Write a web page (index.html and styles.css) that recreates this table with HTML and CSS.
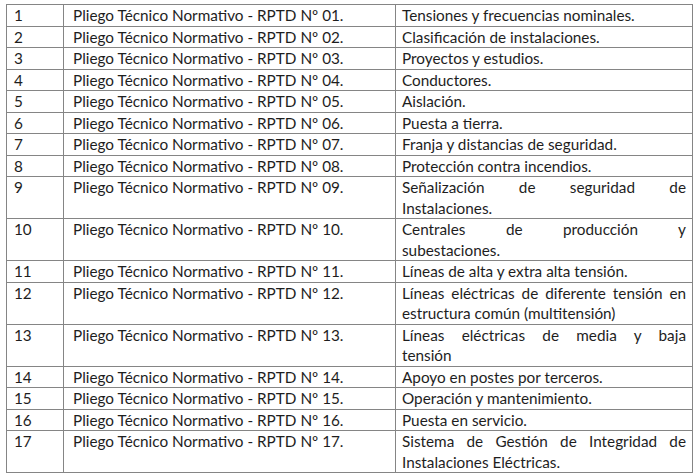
FILE: index.html
```html
<!DOCTYPE html>
<html lang="es">
<head>
<meta charset="utf-8">
<title>Pliegos Técnicos Normativos RPTD</title>
<link rel="stylesheet" href="styles.css">
</head>
<body>
<table class="rptd">
  <colgroup>
    <col class="c-num">
    <col class="c-doc">
    <col class="c-desc">
  </colgroup>
  <tbody>
    <tr><td>1</td><td>Pliego Técnico Normativo - RPTD Nº 01.</td><td>Tensiones y frecuencias nominales.</td></tr>
    <tr><td>2</td><td>Pliego Técnico Normativo - RPTD Nº 02.</td><td>Clasificación de instalaciones.</td></tr>
    <tr><td>3</td><td>Pliego Técnico Normativo - RPTD Nº 03.</td><td>Proyectos y estudios.</td></tr>
    <tr><td>4</td><td>Pliego Técnico Normativo - RPTD Nº 04.</td><td>Conductores.</td></tr>
    <tr><td>5</td><td>Pliego Técnico Normativo - RPTD Nº 05.</td><td>Aislación.</td></tr>
    <tr><td>6</td><td>Pliego Técnico Normativo - RPTD Nº 06.</td><td>Puesta a tierra.</td></tr>
    <tr><td>7</td><td>Pliego Técnico Normativo - RPTD Nº 07.</td><td>Franja y distancias de seguridad.</td></tr>
    <tr><td>8</td><td>Pliego Técnico Normativo - RPTD Nº 08.</td><td>Protección contra incendios.</td></tr>
    <tr><td>9</td><td>Pliego Técnico Normativo - RPTD Nº 09.</td><td><span class="jl">Señalización de seguridad de</span><span class="ln">Instalaciones.</span></td></tr>
    <tr><td>10</td><td>Pliego Técnico Normativo - RPTD Nº 10.</td><td><span class="jl">Centrales de producción y</span><span class="ln">subestaciones.</span></td></tr>
    <tr><td>11</td><td>Pliego Técnico Normativo - RPTD Nº 11.</td><td>Líneas de alta y extra alta tensión.</td></tr>
    <tr><td>12</td><td>Pliego Técnico Normativo - RPTD Nº 12.</td><td><span class="jl">Líneas eléctricas de diferente tensión en</span><span class="ln">estructura común (multitensión)</span></td></tr>
    <tr><td>13</td><td>Pliego Técnico Normativo - RPTD Nº 13.</td><td><span class="jl">Líneas eléctricas de media y baja</span><span class="ln">tensión</span></td></tr>
    <tr><td>14</td><td>Pliego Técnico Normativo - RPTD Nº 14.</td><td>Apoyo en postes por terceros.</td></tr>
    <tr><td>15</td><td>Pliego Técnico Normativo - RPTD Nº 15.</td><td>Operación y mantenimiento.</td></tr>
    <tr><td>16</td><td>Pliego Técnico Normativo - RPTD Nº 16.</td><td>Puesta en servicio.</td></tr>
    <tr><td>17</td><td>Pliego Técnico Normativo - RPTD Nº 17.</td><td><span class="jl">Sistema de Gestión de Integridad de</span><span class="ln">Instalaciones Eléctricas.</span></td></tr>
  </tbody>
</table>
</body>
</html>
```
FILE: styles.css
```css
html, body {
  margin: 0;
  background: #ffffff;
}
body {
  padding: 4px 0 0 6px;
  font-family: "Lato", "Open Sans", "Liberation Sans", sans-serif;
  font-size: 15.3px;
  color: #1e1e1e;
}
.rptd {
  border-collapse: collapse;
  table-layout: fixed;
  width: 686px;
}
.c-num { width: 57px; }
.c-doc { width: 332px; }
.c-desc { width: 297px; }
.rptd td {
  border: 1px solid #858585;
  padding: 0 6px 0 7px;
  line-height: 20.5px;
  vertical-align: top;
  white-space: nowrap;
  overflow: hidden;
}
.rptd td:nth-child(2) { padding-left: 9px; }
.rptd td:nth-child(3) { padding-left: 6px; }
.jl {
  display: block;
  text-align: justify;
  text-align-last: justify;
}
.ln { display: block; }
```
